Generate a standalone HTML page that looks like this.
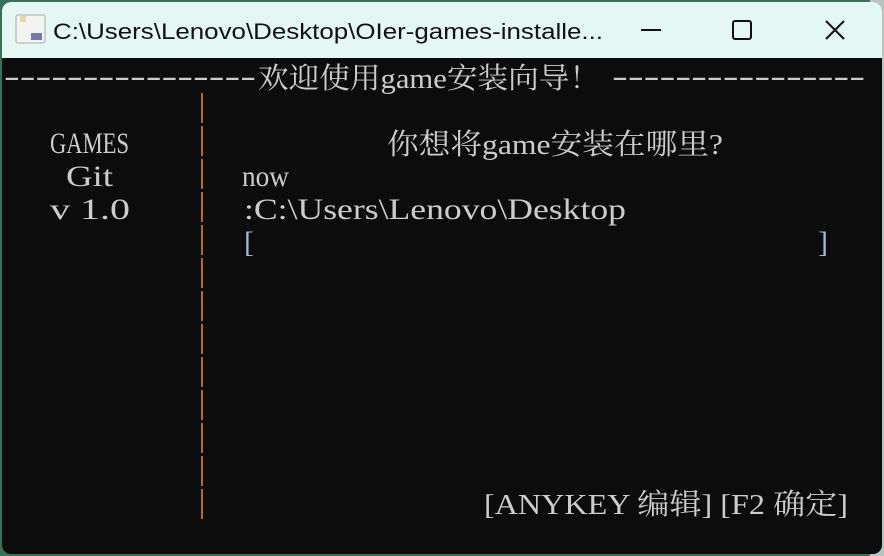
<!DOCTYPE html>
<html><head><meta charset="utf-8"><style>
html,body{margin:0;padding:0;width:884px;height:556px;overflow:hidden;background:#2f6a4e;}
svg{display:block}
</style></head><body>
<svg width="884" height="556" xmlns="http://www.w3.org/2000/svg">
<rect x="0" y="0" width="884" height="556" fill="#3b6f58"/>
<rect x="870" y="0" width="14" height="556" fill="#b9c4c0"/>
<rect x="2" y="2" width="880" height="552" rx="9" fill="#0c0c0c"/>
<path d="M2 58 V11 A9 9 0 0 1 11 2 H873 A9 9 0 0 1 882 11 V58 Z" fill="#e4f7f3"/>
<!-- icon -->
<rect x="16" y="15" width="29" height="28" rx="2" fill="#f4f4f2" stroke="#a9a9a9"/>
<rect x="31" y="33" width="11" height="7" fill="#7678a8"/>
<rect x="20" y="16" width="6" height="6" fill="#e9d9a8"/>
<text x="53" y="39" font-family="Liberation Sans, sans-serif" font-size="22" fill="#111" textLength="550" lengthAdjust="spacingAndGlyphs">C:\Users\Lenovo\Desktop\OIer-games-installe...</text>
<rect x="641" y="29" width="20" height="2" fill="#111"/>
<rect x="733" y="21" width="18" height="18" rx="2" fill="none" stroke="#111" stroke-width="2"/>
<path d="M826 21 L844 39 M844 21 L826 39" stroke="#111" stroke-width="2"/>
<g font-family="Liberation Serif, 'Noto Serif CJK SC', serif" fill="#cccccc" font-size="30">
<text x="4" y="86" textLength="252" lengthAdjust="spacingAndGlyphs">----------------</text>
<text x="258" y="88" textLength="342" lengthAdjust="spacingAndGlyphs" font-size="29">欢迎使用game安装向导！</text>
<text x="612" y="86" textLength="253" lengthAdjust="spacingAndGlyphs">----------------</text>
<text x="50" y="153" textLength="79" lengthAdjust="spacingAndGlyphs">GAMES</text>
<text x="66" y="186" textLength="47" lengthAdjust="spacingAndGlyphs">Git</text>
<text x="50" y="219" textLength="80" lengthAdjust="spacingAndGlyphs">v 1.0</text>
<text x="387" y="154" textLength="336" lengthAdjust="spacingAndGlyphs" font-size="29">你想将game安装在哪里?</text>
<text x="242" y="186" textLength="47" lengthAdjust="spacingAndGlyphs">now</text>
<text x="244" y="219" textLength="382" lengthAdjust="spacingAndGlyphs">:C:\Users\Lenovo\Desktop</text>
<text x="244" y="252" fill="#9fb8d8">[</text>
<text x="818" y="252" fill="#9fb8d8">]</text>
<text x="484" y="514" textLength="364" lengthAdjust="spacingAndGlyphs" font-size="29">[ANYKEY 编辑] [F2 确定]</text>
</g>
<g fill="#b8692c">
<rect x="201" y="93" width="2" height="30"/>
<rect x="201" y="126" width="2" height="30"/>
<rect x="201" y="159" width="2" height="30"/>
<rect x="201" y="192" width="2" height="30"/>
<rect x="201" y="225" width="2" height="30"/>
<rect x="201" y="258" width="2" height="30"/>
<rect x="201" y="291" width="2" height="30"/>
<rect x="201" y="324" width="2" height="30"/>
<rect x="201" y="357" width="2" height="30"/>
<rect x="201" y="390" width="2" height="30"/>
<rect x="201" y="423" width="2" height="30"/>
<rect x="201" y="456" width="2" height="30"/>
<rect x="201" y="489" width="2" height="30"/>
</g>
</svg>
</body></html>
